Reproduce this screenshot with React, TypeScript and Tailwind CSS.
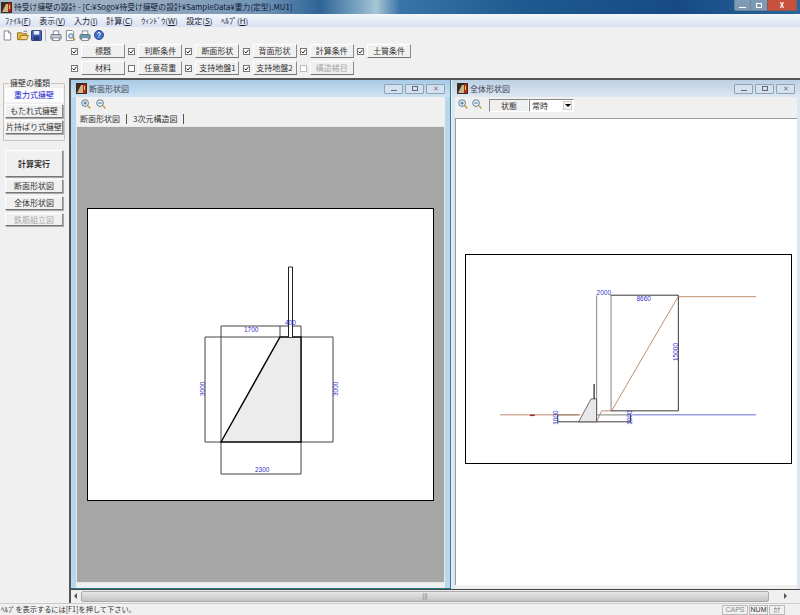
import type { ReactNode } from "react";

const MENUS = [
    ["ﾌｧｲﾙ(", "F", ")"],
    ["表示(", "V", ")"],
    ["入力(", "I", ")"],
    ["計算(", "C", ")"],
    ["ｳｨﾝﾄﾞｳ(", "W", ")"],
    ["設定(", "S", ")"],
    ["ﾍﾙﾌﾟ(", "H", ")"],
];

const ROW_1 = [
    { label: "標題", on: true },
    { label: "判断条件", on: true },
    { label: "断面形状", on: true },
    { label: "背面形状", on: true },
    { label: "計算条件", on: true },
    { label: "土質条件", on: true },
];

const ROW_2 = [
    { label: "材料", on: true },
    { label: "任意荷重", on: false },
    { label: "支持地盤1", on: true },
    { label: "支持地盤2", on: true },
    { label: "構造緒目", on: false, disabled: true },
];

const raised = "border border-t-white border-l-white border-r-[#8a8a8a] border-b-[#777] bg-[#f0f0f0]";

const AppIcon = () => (
    <svg width="11" height="11" viewBox="0 0 11 11" className="shrink-0">
        <rect width="11" height="11" fill="#3b2a20" />
        <path d="M1 10 L5 2 L7 2 L7 10 Z" fill="#c9b48a" />
        <rect x="7" y="1" width="3" height="9" fill="#b3261e" />
        <rect x="8" y="3" width="1" height="4" fill="#f3d21f" />
    </svg>
);

const NewIcon = () => (
    <svg width="9" height="11" viewBox="0 0 11 12">
        <path d="M1.5 .5 H7 L9.5 3 V11.5 H1.5 Z" fill="#fff" stroke="#6a7280" />
        <path d="M7 .5 V3 H9.5" fill="#dfe3ea" stroke="#6a7280" />
    </svg>
);

const OpenIcon = () => (
    <svg width="12" height="11" viewBox="0 0 13 12" className="ml-[5px]">
        <path d="M.5 3 H5 L6 4 H10.5 V10.5 H.5 Z" fill="#e6b64a" stroke="#9a7420" />
        <path d="M2.5 10.5 L4.5 6 H12.5 L10.5 10.5 Z" fill="#f6d77c" stroke="#9a7420" />
        <path d="M7 2 Q9 0 11 2" fill="none" stroke="#3c78c8" />
    </svg>
);

const SaveIcon = () => (
    <svg width="11" height="11" viewBox="0 0 12 12" className="ml-[2px]">
        <rect x=".5" y=".5" width="11" height="11" rx="1" fill="#3f5fb0" stroke="#23366f" />
        <rect x="3" y="1" width="6" height="4" fill="#e9edf6" />
        <rect x="3" y="7" width="6" height="4" fill="#25397a" />
    </svg>
);

const PrintIcon = ({ tint = "#c9ced6", className = "" }: { tint?: string; className?: string }) => (
    <svg width="12" height="11" viewBox="0 0 13 12" className={className}>
        <path d="M3.5 1 H9.5 V5 H3.5 Z" fill="#fff" stroke="#7b8794" />
        <rect x="1" y="5" width="11" height="5" rx="1" fill={tint} stroke="#5f6b78" />
        <rect x="3" y="8.500" width="7" height="3" fill="#fff" stroke="#7b8794" />
    </svg>
);

const PreviewIcon = () => (
    <svg width="11" height="11" viewBox="0 0 12 12" className="ml-[3px]">
        <path d="M1.500 .5 H8 L9.500 2 V11.500 H1.500 Z" fill="#fff" stroke="#7b8794" />
        <circle cx="6.500" cy="6.500" r="2.500" fill="#cfe3f7" stroke="#4a6a90" />
        <path d="M8.500 8.500 L11 11" stroke="#c29322" strokeWidth="1.500" />
    </svg>
);

const HelpIcon = () => (
    <svg width="10" height="10" viewBox="0 0 12 12" className="ml-[3px]">
        <circle cx="6" cy="6" r="5.500" fill="#3f6fc8" stroke="#27468a" />
        <path d="M4.300 4.600 Q4.500 3 6 3 Q7.700 3 7.700 4.500 Q7.700 5.500 6 6.200 V7" fill="none" stroke="#fff" strokeWidth="1.200" />
        <rect x="5.400" y="8" width="1.200" height="1.200" fill="#fff" />
    </svg>
);

const ZoomIcon = ({ plus }: { plus?: boolean }) => (
    <svg width="10" height="10" viewBox="0 0 11 11">
        <circle cx="4.500" cy="4.500" r="3.700" fill="#e8f0f6" stroke="#54738c" />
        <path d="M2.700 4.500 H6.300" stroke="#2f5f86" />
        {plus && <path d="M4.500 2.700 V6.300" stroke="#2f5f86" />}
        <path d="M7.500 7.500 L10.300 10.300" stroke="#c9a02c" strokeWidth="1.600" />
    </svg>
);

const Check = ({ on, disabled }: { on: boolean; disabled?: boolean }) => (
    <span className={`flex h-[7px] w-[7px] shrink-0 items-center justify-center border ${disabled ? "border-[#bbb]" : "border-[#777]"} bg-white`}>
        {on && (
            <svg width="5" height="5" viewBox="0 0 5 5">
                <path d="M.5 2.500 L2 4 L4.500 .8" fill="none" stroke="#222" />
            </svg>
        )}
    </span>
);

const CheckItem = ({ label, on, disabled }: { label: string; on: boolean; disabled?: boolean }) => (
    <div className="flex w-[57.2px] shrink-0 items-center">
        <Check on={on} disabled={disabled} />
        <span className={`ml-[3px] flex h-[14px] w-[44px] items-center justify-center text-[8px] ${raised} ${disabled ? "text-[#aaa]" : "text-[#333]"}`}>
            {label}
        </span>
    </div>
);

const SideButton = ({ children, className = "" }: { children: ReactNode; className?: string }) => (
    <div className={`flex items-center justify-center whitespace-nowrap text-[8px] shadow-[1px_1px_0_#aaa] ${raised} ${className}`}>{children}</div>
);

const WinButton = ({ kind }: { kind: "min" | "max" | "close" }) => (
    <span className="flex h-[10px] w-[19px] items-center justify-center rounded-[1px] border border-[#8da3b8] bg-[#d4e1ee]">
        {kind === "min" && <span className="mt-[3px] h-px w-[6px] bg-[#667]" />}
        {kind === "max" && <span className="h-[5px] w-[6px] border border-[#667]" />}
        {kind === "close" && <span className="text-[7px] leading-none text-[#778]">✕</span>}
    </span>
);

const MdiWindow = ({ title, active, className, children }: { title: string; active?: boolean; className: string; children: ReactNode }) => (
    <div className={`flex flex-col ${className}`}>
        <div className={`flex h-[17px] shrink-0 items-center bg-gradient-to-b ${active ? "from-[#a9cbe6] to-[#cfe3f2]" : "from-[#bcd0e4] to-[#dde7f2]"} pl-[5px] pr-[5px]`}>
            <AppIcon />
            <span className="ml-[2px] text-[8px] text-[#445]">{title}</span>
            <div className="ml-auto flex gap-[2px]">
                <WinButton kind="min" />
                <WinButton kind="max" />
                <WinButton kind="close" />
            </div>
        </div>
        {children}
    </div>
);

const dimText = { fontFamily: "'Liberation Sans', sans-serif", fontSize: 6.5, fill: "#3434c8" };

const SectionDrawing = () => (
    <svg viewBox="88 209 345 291" className="h-full w-full">
        <g stroke="#444" strokeWidth="1" fill="none">
            <path d="M221 326 H301 M221 326 V474 M280 326 V337 M301 326 V474 M221 474 H301" />
            <path d="M205 337 H280 M205 442 H221 M205 337 V442" />
            <path d="M301 337 H333 M301 442 H333 M333 337 V442" />
        </g>
        <path d="M221 442 L280 337 H301 V442 Z" fill="#ececec" stroke="#000" strokeWidth="1.400" />
        <path d="M288.500 337 V267 H292.500 V337" fill="#fff" stroke="#222" strokeWidth="1" />
        <text x="244" y="332" {...dimText}>1700</text>
        <text x="285" y="325" {...dimText}>400</text>
        <text x="255" y="471.500" {...dimText}>2300</text>
        <text transform="translate(205 396) rotate(-90)" {...dimText}>3000</text>
        <text transform="translate(338 396) rotate(-90)" {...dimText}>3000</text>
    </svg>
);

const OverallDrawing = () => (
    <svg viewBox="465 254 326 208" className="h-full w-full">
        <g stroke="#999" strokeWidth="1.200" fill="none">
            <path d="M596 294 V421 M610.500 294 V410 M557 414 H578 M596 414 H630" />
        </g>
        <g stroke="#222" strokeWidth="0.900" fill="none">
            <path d="M610 294 H678 V410 H610 M557 421 H630 M557 414 V421 M630 414 V421" />
        </g>
        <g stroke="#b0704a" strokeWidth="0.800" fill="none">
            <path d="M499 414 H580 M678 295.500 H756 M678 295 L611 410 H601 L596 421" />
            <path d="M529 414.500 H534" stroke="#a03020" strokeWidth="1.500" />
        </g>
        <path d="M632 414 H756" stroke="#5a5ad0" strokeWidth="0.900" />
        <path d="M578 421 L590.500 398 H596 V421 Z" fill="#e8e8e8" stroke="#333" strokeWidth="0.700" />
        <path d="M593.500 398 V383" stroke="#222" strokeWidth="1.200" />
        <text x="596" y="294" {...dimText}>2000</text>
        <text x="636" y="300" {...dimText}>8660</text>
        <text transform="translate(678 360) rotate(-90)" {...dimText}>15000</text>
        <text transform="translate(557.500 424) rotate(-90)" {...dimText}>1000</text>
        <text transform="translate(631.500 424) rotate(-90)" {...dimText}>1000</text>
    </svg>
);

const App = () => {
    return (
        <div className="flex h-[615px] w-[800px] flex-col overflow-hidden bg-[#f0f0f0] font-['Noto_Sans_CJK_JP','Liberation_Sans',sans-serif] text-[#333]">
            {/* title bar */}
            <div className="flex h-[14px] shrink-0 items-center bg-[linear-gradient(90deg,#a8b9c8_0%,#93a9be_20%,#6f92b4_33%,#2d6496_40%,#7fa8c4_45%,#a9c6d6_47%,#3a74a6_50%,#1f5a90_65%,#174a85_85%,#2a679c_100%)] pl-[1px]">
                <AppIcon />
                <span className="ml-[2px] whitespace-nowrap text-[7.8px] leading-none text-[#10203a]">
                    待受け擁壁の設計 - [C:¥Sogo¥待受け擁壁の設計¥SampleData¥重力(定型).MU1]
                </span>
                <div className="ml-auto mr-[3px] flex self-start">
                    <span className="flex h-[11px] w-[17px] items-end justify-center rounded-bl-[2px] border border-t-0 border-[#6a8299] bg-[#7e9ab5] pb-[2px]">
                        <span className="h-px w-[7px] bg-white" />
                    </span>
                    <span className="flex h-[11px] w-[16px] items-center justify-center border-b border-[#6a8299] bg-[#7e9ab5]">
                        <span className="h-[5px] w-[6px] border border-white" />
                    </span>
                    <span className="flex h-[11px] w-[30px] items-center justify-center rounded-br-[2px] border border-t-0 border-[#8a5a50] bg-[#c8503c] text-[7px] font-bold leading-none text-white">
                        X
                    </span>
                </div>
            </div>

            {/* menu */}
            <div className="flex h-[13px] shrink-0 items-center gap-[8.5px] bg-gradient-to-b from-[#f3f6fc] to-[#d9e2f2] pl-[5px] text-[8px] leading-none text-[#223]">
                {MENUS.map((m) => (
                    <span key={m[1]} className="whitespace-nowrap">
                        {m[0]}
                        <span className="underline">{m[1]}</span>
                        {m[2]}
                    </span>
                ))}
            </div>

            {/* toolbar */}
            <div className="flex h-[16px] shrink-0 items-center pl-[3px]">
                <NewIcon />
                <OpenIcon />
                <SaveIcon />
                <span className="ml-[3px] h-[12px] w-px bg-[#bbb]" />
                <PrintIcon className="ml-[4px]" />
                <PreviewIcon />
                <PrintIcon tint="#5fa3b8" className="ml-[3px]" />
                <HelpIcon />
            </div>

            {/* condition buttons */}
            <div className="flex h-[35px] shrink-0 flex-col gap-[3px] pl-[71px] pt-[1px]">
                <div className="flex h-[14px]">
                    {ROW_1.map((item) => (
                        <CheckItem key={item.label} {...item} />
                    ))}
                </div>
                <div className="flex h-[14px]">
                    {ROW_2.map((item) => (
                        <CheckItem key={item.label} {...item} />
                    ))}
                </div>
            </div>

            <div className="flex min-h-0 flex-1">
                {/* left panel */}
                <div className="flex w-[69px] shrink-0 flex-col pl-[5px] pr-[5px]">
                    <div className="relative ml-[-2px] mt-[5px] flex h-[58px] w-[62px] shrink-0 flex-col gap-[2px] rounded-[1px] border border-[#c4c4c4] px-[1px] pt-[4px]">
                        <span className="absolute left-[5px] top-[-6px] bg-[#f0f0f0] px-[1px] text-[8px] leading-[10px]">擁壁の種類</span>
                        <SideButton className="h-[14px] border-t-[#999] border-l-[#ccc] border-r-white border-b-white bg-[#fbfbfb] text-[#1f1fd0] shadow-none">重力式擁壁</SideButton>
                        <SideButton className="h-[14px]">もたれ式擁壁</SideButton>
                        <SideButton className="h-[14px] text-[7.5px]">片持ばり式擁壁</SideButton>
                    </div>
                    <SideButton className="mt-[9px] h-[27px] w-[58px] shrink-0 font-bold">計算実行</SideButton>
                    <SideButton className="mt-[2px] h-[14px] w-[58px] shrink-0">断面形状図</SideButton>
                    <SideButton className="mt-[3px] h-[14px] w-[58px] shrink-0 border-[#555]">全体形状図</SideButton>
                    <SideButton className="mt-[3px] h-[13px] w-[58px] shrink-0 text-[#aaa]">鉄筋組立図</SideButton>
                </div>

                {/* MDI area */}
                <div className="flex min-w-0 flex-1 flex-col border-l-2 border-t-2 border-[#555]">
                    <div className="flex h-[510px] shrink-0 border-b border-[#444]">
                        <MdiWindow title="断面形状図" active className="w-[380px] border-b border-r border-[#2b7d8f] bg-[#b9d7ea]">
                            <div className="ml-[5px] mr-[5px] flex min-h-0 flex-1 flex-col bg-[#f0f0f0] pb-[5px]">
                                <div className="flex h-[14px] shrink-0 items-center gap-[5px] pl-[5px]">
                                    <ZoomIcon plus />
                                    <ZoomIcon />
                                </div>
                                <div className="flex h-[15px] shrink-0 items-center pl-[4px] text-[8px]">
                                    <span>断面形状図</span>
                                    <span className="ml-[6px] h-[10px] w-px bg-[#555]" />
                                    <span className="ml-[6px]">3次元構造図</span>
                                    <span className="ml-[6px] h-[10px] w-px bg-[#555]" />
                                </div>
                                <div className="flex min-h-0 flex-1 flex-col justify-end border border-[#e8e8e8] bg-[#a6a6a6] pb-[81px] pl-[10px] pr-[9px]">
                                    <div className="h-[293px] w-[347px] border border-black bg-white">
                                        <SectionDrawing />
                                    </div>
                                </div>
                            </div>
                        </MdiWindow>
                        <MdiWindow title="全体形状図" className="ml-px min-w-0 flex-1 bg-[#dde7f2]">
                            <div className="ml-[3px] mr-[3px] flex min-h-0 flex-1 flex-col bg-[#f0f0f0] pb-[4px]">
                                <div className="flex h-[21px] shrink-0 items-start gap-[4px] pl-[3px] pt-[2px]">
                                    <ZoomIcon plus />
                                    <ZoomIcon />
                                    <span className="ml-[3px] flex h-[13px] w-[40px] items-center justify-center border border-[#888] border-b-white border-r-white text-[8px]">状態</span>
                                    <span className="ml-[-4px] flex h-[13px] w-[45px] items-center border border-[#888] border-b-white border-r-white bg-white pl-[2px] text-[8px]">
                                        常時
                                        <span className="ml-auto mr-px flex h-[9px] w-[9px] items-center justify-center border border-[#ccc] bg-[#f4f4f4]">
                                            <span className="h-0 w-0 border-x-[3px] border-t-[3px] border-x-transparent border-t-black" />
                                        </span>
                                    </span>
                                </div>
                                <div className="flex min-h-0 flex-1 flex-col border-l border-t border-[#999] bg-white pl-[9px] pr-[5px] pt-[135px]">
                                    <div className="h-[210px] w-[327px] border border-black bg-white">
                                        <OverallDrawing />
                                    </div>
                                </div>
                            </div>
                        </MdiWindow>
                    </div>
                    {/* scrollbar */}
                    <div className="flex h-[12px] shrink-0 items-center bg-[#efefef]">
                        <span className="ml-[3px] h-0 w-0 border-y-[3px] border-r-[3px] border-y-transparent border-r-[#555]" />
                        <div className="ml-[4px] flex h-[11px] w-[688px] items-center justify-center rounded-[2px] border border-[#aaa] bg-gradient-to-b from-[#e6e6e6] to-[#c4c4c4] text-[6px] leading-none text-[#555]">
                            |||
                        </div>
                        <span className="ml-auto mr-[13px] h-0 w-0 border-y-[3px] border-l-[3px] border-y-transparent border-l-[#555]" />
                    </div>
                </div>
            </div>

            {/* status bar */}
            <div className="flex h-[12px] shrink-0 items-center border-t border-[#ccc] pl-[1px] text-[7.2px] leading-none">
                <span>ﾍﾙﾌﾟを表示するには[F1]を押して下さい。</span>
                <div className="ml-auto mr-[15px] flex h-[10px] gap-px text-[7px]">
                    <span className="flex w-[26px] items-center justify-center border border-[#bbb] font-['Liberation_Sans'] text-[#888]">CAPS</span>
                    <span className="flex w-[19px] items-center justify-center border border-[#bbb] font-['Liberation_Sans']">NUM</span>
                    <span className="flex w-[16px] items-center justify-center border border-[#bbb] text-[#777]">ｶﾅ</span>
                </div>
            </div>
        </div>
    );
};

export default App;
